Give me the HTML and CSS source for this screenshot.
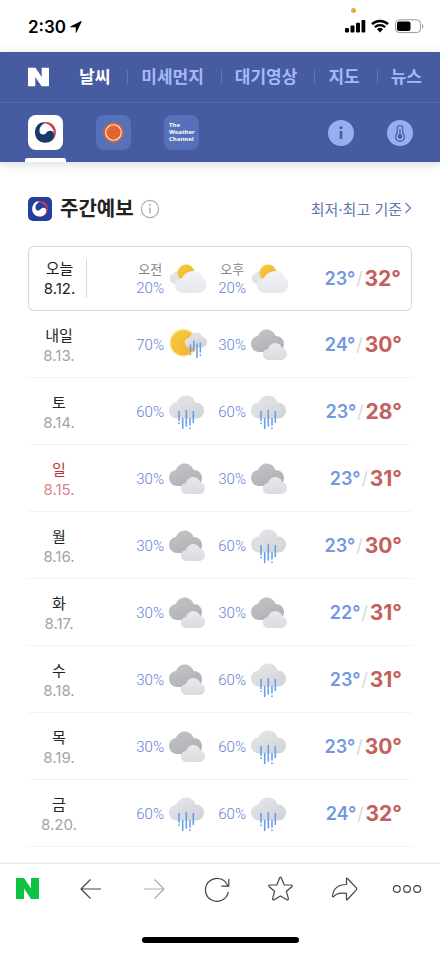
FILE: index.html
```html
<!DOCTYPE html>
<html lang="ko">
<head>
<meta charset="utf-8">
<meta name="viewport" content="width=device-width, initial-scale=1">
<title>주간예보</title>
<link rel="stylesheet" href="styles.css">
</head>
<body>
<svg class="sprite" aria-hidden="true">
  <defs>
    <linearGradient id="g-dark" x1="0" y1="0" x2="0.6" y2="1"><stop offset="0" stop-color="#c3c5c7"/><stop offset="1" stop-color="#b0b2b5"/></linearGradient>
    <linearGradient id="g-light" x1="0" y1="0" x2="0" y2="1"><stop offset="0" stop-color="#e8e9ec"/><stop offset="1" stop-color="#d9dbdf"/></linearGradient>
    <linearGradient id="g-rain" x1="0" y1="0" x2="1" y2="1"><stop offset="0" stop-color="#e6e7ea"/><stop offset="1" stop-color="#d0d2d5"/></linearGradient>
    <linearGradient id="g-pale" x1="0" y1="0" x2="0" y2="1"><stop offset="0" stop-color="#f1f2f6"/><stop offset="1" stop-color="#e6e8ed"/></linearGradient>
    <linearGradient id="g-sun" x1="0" y1="0" x2="1" y2="1"><stop offset="0" stop-color="#f7cc3c"/><stop offset="1" stop-color="#f2ae35"/></linearGradient>
  </defs>
  <symbol id="partly" viewBox="0 0 40 36">
    <path d="M6 23a5.500 5.500 0 0 1-.5-10.500C7 9.500 12 9.500 14 13l2 10z" fill="#e1e3e7"/>
    <circle cx="18" cy="12" r="8.500" fill="url(#g-sun)"/>
    <path d="M14.500 32a7.500 7.500 0 0 1-7.500-7.500c0-4 3-6.800 6.800-7.200C16 13 20.500 10 25.500 10c5.500 0 8.800 3 9.700 7.200 2 1.500 3 4 3 6.800 0 4.500-3.500 8-8 8z" fill="url(#g-pale)"/>
  </symbol>
  <symbol id="cloudy" viewBox="0 0 40 36">
    <path d="M9 25a8 8 0 0 1-8-8c0-4.500 3-7.700 7-8C9.500 5 12.500 2.500 16.500 2.500S24.300 5 25.500 9c5 0 8.500 3.500 8.500 8s-3.500 8-8 8z" fill="url(#g-dark)"/>
    <path d="M18.500 33a5.500 5.500 0 0 1-.5-11c1-3.500 4-6 7.500-6 3.300 0 5.800 2.200 6.800 5.200 2.700.3 4.700 2.800 4.700 5.800 0 3.500-2.500 6-6 6z" fill="url(#g-light)"/>
  </symbol>
  <symbol id="rain" viewBox="0 0 40 36">
    <path d="M9 24.500a8 8 0 0 1-8-8c0-4.500 3.200-7.700 7.500-8 1.500-4 4.800-7 9.500-7s8 2.500 9.500 7c5 0 8.500 3.500 8.500 8s-3.500 8-8 8z" fill="url(#g-rain)"/>
    <path d="M11 17.500v9M11 29v.5M14.700 24.500v10M18.300 16.500v15.500M22 24.500v6.500M22 34v.5M25.300 17.500v11" fill="none" stroke="#6a9fe9" stroke-width="1.600" stroke-linecap="round"/>
  </symbol>
  <symbol id="sunrain" viewBox="0 0 40 36">
    <circle cx="15.300" cy="15.800" r="14" fill="#faeba5"/>
    <circle cx="15.300" cy="15.800" r="12.500" fill="url(#g-sun)"/>
    <path d="M22 20.500a5 5 0 0 1-.5-10c1-3 3.500-5 6.700-5s5.300 1.800 6.200 4.500c2.600.3 4.600 2.300 4.600 5 0 3-2.300 5.500-5.500 5.500z" fill="url(#g-rain)"/>
    <path d="M22.500 18v6M22.500 27v.5M25.800 14v10M29 17v13.500M32.300 16v9M32.300 28v.5" fill="none" stroke="#6a9fe9" stroke-width="1.600" stroke-linecap="round"/>
  </symbol>
  <symbol id="swirl" viewBox="0 0 36 36">
    <path d="M19 7.700C12 6 7.200 11.500 7.200 18c0 6.500 4.800 10.500 10.600 10.500 5.400 0 9.200-3.800 9.200-8 0-4.600-6-5.700-8.400-2-1.800 2.800-6.800 2.100-6.800-2.300 0-4.200 3.200-7.400 7.200-8.500z" fill="currentColor"/>
    <path d="M15 7.800c6.500-2.500 13.500 2 13.700 9.500.1 4-1.300 7.200-4.200 9.700 2.600-4.300 3.200-8.300 1.500-11.700-2-4-5.500-6.500-11-7.500z" fill="#d23c4c"/>
  </symbol>
  <symbol id="letter" viewBox="0 0 23 21"><path d="M0 0h8l7 10.500V0h8v21h-8L8 10.500V21H0z"/></symbol>
</svg>

<div class="status">
  <span class="clock">2:30</span>
  <svg class="locate" viewBox="0 0 12 12" aria-hidden="true"><path d="M11.700.4 6.500 11.600c-.2.400-.7.300-.7-.1V6.200H.5c-.4 0-.5-.5-.1-.7L11.200.1c.4-.2.600 0 .5.300z"/></svg>
  <i class="mic-dot"></i>
  <svg class="signals" viewBox="0 0 80 16" aria-hidden="true">
    <rect x="0" y="9" width="4" height="4.500" rx="1"/><rect x="5.500" y="6.500" width="4" height="7" rx="1"/><rect x="11" y="3.800" width="4" height="9.700" rx="1"/><rect x="16.500" y="1" width="3.800" height="12.500" rx="1"/>
    <path d="M27 5.200a11.500 11.500 0 0 1 16 0M29.800 8.200a7.500 7.500 0 0 1 10.400 0" fill="none" stroke="#000" stroke-width="2.400"/><path d="M32 10.200a4.400 4.400 0 0 1 6 0l-3 3.200z"/>
    <rect x="50.500" y=".8" width="25" height="12.800" rx="3.800" fill="none" stroke="#999"/><rect x="52" y="2.500" width="13.500" height="9.400" rx="2"/><path d="M77 5v4.400c1.800-.8 1.800-3.600 0-4.400z" fill="#999"/>
  </svg>
</div>

<header class="header">
  <nav class="menu">
    <a class="home" href="#" aria-label="NAVER"><svg viewBox="0 0 23 21"><use href="#letter"/></svg></a>
    <ul class="tabs">
      <li><a class="on" href="#">날씨</a></li>
      <li><a href="#">미세먼지</a></li>
      <li><a href="#">대기영상</a></li>
      <li><a href="#">지도</a></li>
      <li><a href="#">뉴스</a></li>
    </ul>
  </nav>
  <div class="sources">
    <button class="source selected" aria-label="기상청"><svg viewBox="0 0 36 36"><use href="#swirl"/></svg></button>
    <button class="source" aria-label="아큐웨더">
      <svg viewBox="0 0 36 36"><circle cx="18" cy="18" r="9.800" fill="none" stroke="#e2642f" stroke-width="1.800" stroke-dasharray="2 1.079"/><circle cx="18" cy="18" r="9.300" fill="#e2642f"/><circle cx="18" cy="18" r="8" fill="none" stroke="#ffdcc8" stroke-width="1.200"/></svg>
    </button>
    <button class="source channel">The<br>Weather<br>Channel</button>
    <button class="round first" aria-label="정보"><svg viewBox="0 0 26 26"><circle cx="13" cy="7.800" r="1.500"/><path d="M11.700 11h2.600v8h-2.600z"/></svg></button>
    <button class="round" aria-label="기온"><svg viewBox="0 0 26 26"><path d="M10.200 13.500V8.300a2.800 2.800 0 0 1 5.600 0v5.200a4.400 4.400 0 1 1-5.600 0z" fill="none" stroke="#465ba2" stroke-width="1.200"/><circle cx="13" cy="16.500" r="2.300"/><path d="M12.400 9h1.200v6h-1.200z"/></svg></button>
  </div>
</header>

<main>
  <div class="heading">
    <svg class="badge" viewBox="0 0 24 24" aria-hidden="true"><rect width="24" height="24" rx="5" fill="#233f9b"/><use href="#swirl" x="-1" y="-1" width="26" height="26"/></svg>
    <h1>주간예보</h1>
    <button class="info" aria-label="도움말"><svg viewBox="0 0 20 20"><circle cx="10" cy="10" r="8.600" fill="none" stroke="#adadad" stroke-width="1.200"/><path d="M9.400 8.500h1.200v6H9.400zM9.200 5.300h1.600v1.500H9.200z" fill="#999"/></svg></button>
    <a class="basis" href="#">최저·최고 기준<svg viewBox="0 0 8 12" aria-hidden="true"><path d="m1.500 1 5 5-5 5" fill="none" stroke="currentColor" stroke-width="1.200"/></svg></a>
  </div>

  <table class="week">
    <colgroup><col class="c-day"><col class="c-am"><col class="c-pm"><col></colgroup>
    <tbody>
    <tr class="today"><th scope="row">오늘<span>8.12.</span></th>
      <td><div class="sky"><p><small>오전</small>20%</p><svg><use href="#partly"/></svg></div></td>
      <td><div class="sky"><p><small>오후</small>20%</p><svg><use href="#partly"/></svg></div></td>
      <td><div class="temp"><b>23°</b><i>/</i><strong>32°</strong></div></td></tr>
    <tr><th scope="row">내일<span>8.13.</span></th>
      <td><div class="sky"><p>70%</p><svg><use href="#sunrain"/></svg></div></td>
      <td><div class="sky"><p>30%</p><svg><use href="#cloudy"/></svg></div></td>
      <td><div class="temp"><b>24°</b><i>/</i><strong>30°</strong></div></td></tr>
    <tr><th scope="row">토<span>8.14.</span></th>
      <td><div class="sky"><p>60%</p><svg><use href="#rain"/></svg></div></td>
      <td><div class="sky"><p>60%</p><svg><use href="#rain"/></svg></div></td>
      <td><div class="temp"><b>23°</b><i>/</i><strong>28°</strong></div></td></tr>
    <tr class="sunday"><th scope="row">일<span>8.15.</span></th>
      <td><div class="sky"><p>30%</p><svg><use href="#cloudy"/></svg></div></td>
      <td><div class="sky"><p>30%</p><svg><use href="#cloudy"/></svg></div></td>
      <td><div class="temp"><b>23°</b><i>/</i><strong>31°</strong></div></td></tr>
    <tr><th scope="row">월<span>8.16.</span></th>
      <td><div class="sky"><p>30%</p><svg><use href="#cloudy"/></svg></div></td>
      <td><div class="sky"><p>60%</p><svg><use href="#rain"/></svg></div></td>
      <td><div class="temp"><b>23°</b><i>/</i><strong>30°</strong></div></td></tr>
    <tr><th scope="row">화<span>8.17.</span></th>
      <td><div class="sky"><p>30%</p><svg><use href="#cloudy"/></svg></div></td>
      <td><div class="sky"><p>30%</p><svg><use href="#cloudy"/></svg></div></td>
      <td><div class="temp"><b>22°</b><i>/</i><strong>31°</strong></div></td></tr>
    <tr><th scope="row">수<span>8.18.</span></th>
      <td><div class="sky"><p>30%</p><svg><use href="#cloudy"/></svg></div></td>
      <td><div class="sky"><p>60%</p><svg><use href="#rain"/></svg></div></td>
      <td><div class="temp"><b>23°</b><i>/</i><strong>31°</strong></div></td></tr>
    <tr><th scope="row">목<span>8.19.</span></th>
      <td><div class="sky"><p>30%</p><svg><use href="#cloudy"/></svg></div></td>
      <td><div class="sky"><p>60%</p><svg><use href="#rain"/></svg></div></td>
      <td><div class="temp"><b>23°</b><i>/</i><strong>30°</strong></div></td></tr>
    <tr><th scope="row">금<span>8.20.</span></th>
      <td><div class="sky"><p>60%</p><svg><use href="#rain"/></svg></div></td>
      <td><div class="sky"><p>60%</p><svg><use href="#rain"/></svg></div></td>
      <td><div class="temp"><b>24°</b><i>/</i><strong>32°</strong></div></td></tr>
    </tbody>
  </table>
</main>

<footer class="toolbar">
  <div class="tools">
    <button aria-label="NAVER"><svg class="green" viewBox="0 0 23 21"><use href="#letter"/></svg></button>
    <button aria-label="뒤로"><svg class="line" viewBox="0 0 28 28"><path d="M25 14H5M14.500 4.500 5 14l9.500 9.500"/></svg></button>
    <button aria-label="앞으로" class="dim"><svg class="line" viewBox="0 0 28 28"><path d="M4 14h20M14.500 4.500 24 14l-9.500 9.500"/></svg></button>
    <button aria-label="새로고침"><svg class="line" viewBox="0 0 28 28"><path d="M25.300 16.800A11.500 11.500 0 1 1 24.800 11M25.800 4v7.200h-7.500"/></svg></button>
    <button aria-label="즐겨찾기"><svg class="line" viewBox="0 0 28 28"><path d="M13.600 3q.9-1.600 1.800 0l2.800 7h7.100q1.700.4.500 1.700l-5.400 4.600 2 7.300q0 1.700-1.500 1.100l-6.400-3.800-6.400 3.800q-1.500.6-1.500-1.100l2-7.300-5.400-4.600Q2 10.400 3.700 10h7.100z"/></svg></button>
    <button aria-label="공유"><svg class="line" viewBox="0 0 28 28"><path d="M16.500 3.500q.3-.8 1 0l9 9.700q.5.800 0 1.500l-9 9.800q-.7.800-1 0v-6.200c-6.500-.7-9.300-.3-13 3.400q-1 .6-1-.6c.5-7 5.500-11.800 14-11.600z"/></svg></button>
    <button aria-label="더보기"><svg class="line" viewBox="0 0 28 28"><circle cx="3.800" cy="14" r="3.400"/><circle cx="14" cy="14" r="3.400"/><circle cx="24.200" cy="14" r="3.400"/></svg></button>
  </div>
  <div class="home-bar"></div>
</footer>
</body>
</html>
```
FILE: styles.css
```css
* { box-sizing: border-box; }

body {
  margin: 0;
  min-height: 100vh;
  display: flex;
  flex-direction: column;
  background: #fff;
  color: #222;
  font-family: Inter, "Noto Sans CJK KR", sans-serif;
}

a { color: inherit; text-decoration: none; }
button { border: 0; padding: 0; background: none; font: inherit; color: inherit; }
svg { display: block; }
.sprite { position: absolute; width: 0; height: 0; }

/* Status bar */
.status {
  position: relative;
  display: flex;
  align-items: center;
  height: 52px;
  padding: 2px 15px 0 28px;
  color: #000;
}
.clock { font-size: 17px; font-weight: 600; }
.locate { width: 12px; height: 12px; margin-left: 4px; }
.signals { width: 80px; height: 16px; margin-left: auto; }
.mic-dot {
  position: absolute;
  top: 8px;
  right: 84px;
  width: 5px;
  height: 5px;
  border-radius: 50%;
  background: #e5a94e;
}

/* Header */
.header {
  background: #465ba0;
  box-shadow: 0 2px 10px rgba(40, 50, 90, 0.18);
}
.menu {
  display: flex;
  align-items: center;
  height: 51px;
  padding-left: 28px;
  border-bottom: 1px solid #5668a8;
  overflow: hidden;
}
.home svg { width: 21px; height: 20px; fill: #fff; }
.tabs {
  display: flex;
  margin: 0 0 0 30px;
  padding: 0;
  list-style: none;
  white-space: nowrap;
  font-size: 17px;
  line-height: 24px;
  font-weight: 700;
  color: #a6b9f6;
}
.tabs li { display: flex; align-items: center; }
.tabs li + li::before {
  content: "";
  width: 1px;
  height: 14px;
  margin: 0 13px 0 17px;
  background: #6176b8;
}
.tabs .on { color: #fff; }

.sources {
  display: flex;
  align-items: center;
  height: 59px;
  padding: 0 27px 0 28px;
}
.source {
  position: relative;
  width: 35px;
  height: 35px;
  margin-right: 33px;
  border-radius: 8px;
  background: #5670b9;
}
.source.selected { background: #fff; color: #173a67; }
.source.selected::after {
  content: "";
  position: absolute;
  left: -3px;
  right: -3px;
  bottom: -12px;
  height: 4px;
  border-radius: 2px 2px 0 0;
  background: #fff;
}
.channel {
  padding-left: 5px;
  font: 700 6px/7px "Open Sans", sans-serif;
  text-align: left;
  color: #fff;
}
.round {
  width: 26px;
  height: 26px;
  margin-left: 33px;
  border-radius: 50%;
  background: #99aeee;
  fill: #465ba2;
}
.round.first { margin-left: auto; }

/* Weekly forecast */
main { flex: 1; padding: 0 28px 16px; }
.heading { display: flex; align-items: center; height: 84px; padding-top: 10px; }
.badge { width: 24px; height: 24px; color: #fff; }
h1 { margin: 0 0 0 8px; font-size: 20px; line-height: 30px; font-weight: 700; }
.info { width: 20px; height: 20px; margin-left: 6px; }
.basis {
  display: flex;
  align-items: center;
  gap: 2px;
  margin-left: auto;
  padding-bottom: 2px;
  font-size: 15px;
  color: #6378ad;
}
.basis svg { width: 8px; height: 12px; }

.week {
  width: 100%;
  table-layout: fixed;
  border-collapse: separate;
  border-spacing: 0;
}
.c-day { width: 62px; }
.c-am { width: 118px; }
.c-pm { width: 82px; }
.week th, .week td { height: 67px; padding: 2px 0 0; border-bottom: 1px solid #f3f3f4; }
.week th { font-size: 15px; line-height: 20px; font-weight: 400; padding-top: 4px; }
.week th span { display: block; color: #a3a3a6; }
.week .today th, .week .today td {
  height: 65px;
  padding-top: 0;
  border: solid #d9d9db;
  border-width: 1px 0;
}
.week .today th { position: relative; border-left-width: 1px; border-radius: 6px 0 0 6px; }
.week .today td:last-child { border-right-width: 1px; border-radius: 0 6px 6px 0; }
.week .today th::after {
  content: "";
  position: absolute;
  top: 12px;
  bottom: 12px;
  right: 3px;
  width: 1px;
  background: #d9d9db;
}
.week .today th span { color: #222; }
.week .sunday th { color: #b8372f; }
.week .sunday th span { color: #d98583; }

.sky { display: flex; align-items: center; justify-content: flex-end; gap: 4px; }
.sky p { margin: 0; font: 300 15px/19px Roboto, "Noto Sans CJK KR", sans-serif; color: #6480d8; text-align: center; }
.sky small { display: block; font-size: 13px; font-weight: 400; color: #858588; }
.sky svg { width: 40px; height: 36px; }

.temp { display: flex; align-items: center; justify-content: flex-end; padding-right: 10px; line-height: 28px; }
.temp b { font-size: 18px; font-weight: 600; color: #7398df; }
.temp i { margin: 0 2px 0 1px; font-size: 18px; font-weight: 300; font-style: normal; color: #d0d0d3; }
.temp strong { font-size: 21px; font-weight: 700; color: #c4605d; }

/* Browser toolbar */
.toolbar { height: 90px; border-top: 1px solid #ececec; box-shadow: 0 -1px 3px rgba(0, 0, 0, 0.04); }
.tools { display: flex; align-items: center; justify-content: space-between; height: 49px; padding: 0 13px 0 7px; }
.tools button { display: flex; align-items: center; justify-content: center; width: 40px; height: 40px; color: #444; }
.tools .dim { color: #aaa; }
.green { width: 23px; height: 21px; fill: #0cc441; }
.line { width: 28px; height: 28px; fill: none; stroke: currentColor; stroke-width: 1.2; stroke-linejoin: round; overflow: visible; }
.home-bar { width: 157px; height: 6px; margin: 24px auto 0; border-radius: 3px; background: #000; }
```
